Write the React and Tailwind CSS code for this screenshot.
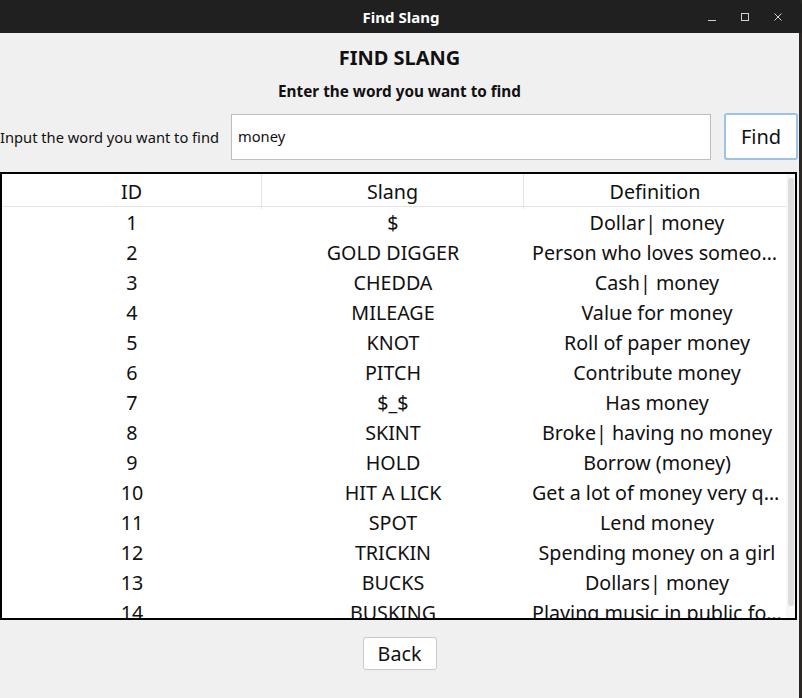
import React from 'react';

const rows = [
  ['1', '$', 'Dollar| money'],
  ['2', 'GOLD DIGGER', 'Person who loves someone for money'],
  ['3', 'CHEDDA', 'Cash| money'],
  ['4', 'MILEAGE', 'Value for money'],
  ['5', 'KNOT', 'Roll of paper money'],
  ['6', 'PITCH', 'Contribute money'],
  ['7', '$_$', 'Has money'],
  ['8', 'SKINT', 'Broke| having no money'],
  ['9', 'HOLD', 'Borrow (money)'],
  ['10', 'HIT A LICK', 'Get a lot of money very quickly'],
  ['11', 'SPOT', 'Lend money'],
  ['12', 'TRICKIN', 'Spending money on a girl'],
  ['13', 'BUCKS', 'Dollars| money'],
  ['14', 'BUSKING', 'Playing music in public for money'],
];

function TitleBar() {
  return (
    <div className="relative h-[33px] bg-[#202020] flex items-center justify-center rounded-tr-[6px]">
      <span className="text-white text-[15px] font-bold leading-[20px]">Find Slang</span>
      <div className="absolute right-[8px] top-0 h-[33px] flex items-center">
        <div className="w-[33px] flex justify-center">
          <svg width="10" height="10" viewBox="0 0 10 10"><path d="M1 8.5h8" stroke="#d0d0d0" strokeWidth="1" /></svg>
        </div>
        <div className="w-[33px] flex justify-center">
          <svg width="10" height="10" viewBox="0 0 10 10"><rect x="1.5" y="1.5" width="7" height="7" fill="none" stroke="#d0d0d0" strokeWidth="1" /></svg>
        </div>
        <div className="w-[33px] flex justify-center">
          <svg width="10" height="10" viewBox="0 0 10 10"><path d="M1.5 1.5l7 7M8.5 1.5l-7 7" stroke="#d0d0d0" strokeWidth="1" /></svg>
        </div>
      </div>
    </div>
  );
}

export default function App() {
  return (
    <div className="w-[802px] h-[698px] bg-[#2a2622] flex flex-col overflow-hidden" style={{ fontFamily: '"Noto Sans", sans-serif' }}>
      <TitleBar />
      <div className="w-[799px] flex-1 bg-[#f0f0f0] flex flex-col text-[#111]">
        <div className="pt-[12px] text-center text-[20px] font-bold leading-[26px]">FIND SLANG</div>
        <div className="mt-[10px] text-center text-[15.3px] font-bold leading-[20px]">Enter the word you want to find</div>

        <div className="mt-[12px] flex items-center h-[47px]">
          <span className="text-[14.7px] w-[231px] whitespace-nowrap leading-[20px]">Input the word you want to find</span>
          <div className="w-[480px] h-[46px] bg-white border border-[#bdbdbd] flex items-center px-[6px] text-[14.7px]">
            money
          </div>
          <button className="ml-[13px] w-[74px] h-[47px] bg-white border-2 border-[#9cc2e8] rounded-[3px] text-[20px]">
            Find
          </button>
        </div>

        <div className="mt-[12px] w-[797px] h-[448px] border-2 border-black bg-white flex overflow-hidden">
          <div className="w-[784px] flex flex-col">
            <div className="grid grid-cols-[260px_262px_262px] h-[33px] shrink-0 border-b border-[#e3e3e3] text-[19.7px] leading-[35px]">
              <div className="text-center border-r border-[#e3e3e3]">ID</div>
              <div className="text-center border-r border-[#e3e3e3]">Slang</div>
              <div className="text-center">Definition</div>
            </div>
            {rows.map((r) => (
              <div key={r[0]} className="grid grid-cols-[260px_262px_262px] h-[30px] shrink-0 text-[19.7px] leading-[32px]">
                <div className="text-center">{r[0]}</div>
                <div className="text-center">{r[1]}</div>
                <div className="text-center pl-[8px] pr-[4px] truncate">{r[2]}</div>
              </div>
            ))}
          </div>
          <div className="flex-1 pt-[4px] pb-[12px] flex justify-center bg-[#f7f7f7]">
            <div className="w-[6px] h-full rounded-full bg-[#dcdcdc]" />
          </div>
        </div>

        <div className="flex justify-center mt-[17px]">
          <button className="w-[74px] h-[33px] bg-white border border-[#c8c8c8] rounded-[3px] text-[19.7px] leading-[30px]">
            Back
          </button>
        </div>
      </div>
    </div>
  );
}
